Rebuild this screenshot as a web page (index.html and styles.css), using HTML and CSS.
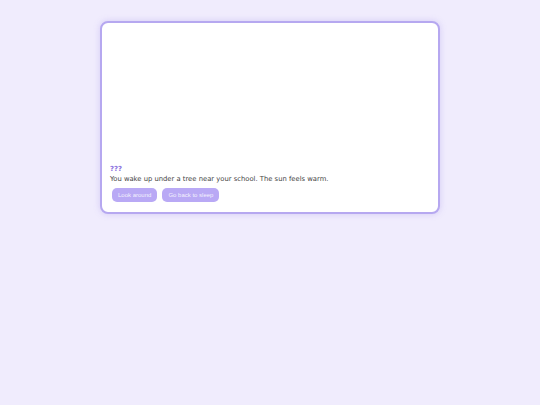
FILE: index.html
```html
<!DOCTYPE html>
<html>
<head>
<meta charset="utf-8">
<link rel="stylesheet" href="styles.css">
</head>
<body>
<div class="page">
  <div class="card">
    <div class="scene"></div>
    <div class="story">
      <div class="speaker">???</div>
      <div class="line">You wake up under a tree near your school. The sun feels warm.</div>
      <div class="choices">
        <button class="choice">Look around</button>
        <button class="choice">Go back to sleep</button>
      </div>
    </div>
  </div>
</div>
</body>
</html>
```
FILE: styles.css
```css
html, body {
  margin: 0;
  padding: 0;
  background: #f0ecfd;
  width: 540px;
  height: 405px;
  overflow: hidden;
}
.page {
  padding-top: 21px;
  padding-left: 100px;
}
.card {
  width: 336px;
  height: 189px;
  background: #ffffff;
  border: 2px solid #b6a8f0;
  border-radius: 8px;
  box-shadow: 0 0 6px rgba(160, 140, 230, 0.35);
  display: flex;
  flex-direction: column;
}
.scene {
  height: 142px;
}
.story {
  padding: 0 8px;
  font-family: "DejaVu Sans", Verdana, sans-serif;
}
.speaker {
  font-size: 7px;
  font-weight: bold;
  color: #8a6fe0;
  line-height: 8px;
}
.line {
  font-size: 6.8px;
  color: #444444;
  line-height: 12px;
}
.choices {
  display: flex;
  gap: 5px;
  padding-left: 2px;
  margin-top: 3px;
}
.choice {
  font-family: "Liberation Sans", Arial, sans-serif;
  font-size: 6px;
  color: rgba(255, 255, 255, 0.85);
  background: #b9a9f5;
  border: none;
  border-radius: 5px;
  height: 14px;
  padding: 0 6px;
}
```
